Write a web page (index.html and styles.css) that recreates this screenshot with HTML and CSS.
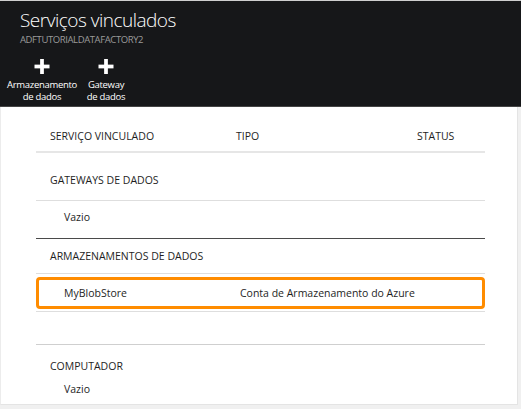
FILE: index.html
```html
<!DOCTYPE html>
<html lang="pt">
<head>
<meta charset="utf-8">
<title>Serviços vinculados</title>
<link rel="stylesheet" href="styles.css">
</head>
<body>
<header class="blade-head">
  <h1 class="title">Serviços vinculados</h1>
  <div class="subtitle">ADFTUTORIALDATAFACTORY2</div>
  <div class="toolbar">
    <button class="cmd cmd-store">
      <svg class="plus" viewBox="0 0 16 16" width="16" height="16"><rect x="6" y="0" width="4" height="16" fill="#fff"/><rect x="0" y="6" width="16" height="4" fill="#fff"/></svg>
      <span>Armazenamento<br>de dados</span>
    </button>
    <button class="cmd cmd-gw">
      <svg class="plus" viewBox="0 0 16 16" width="16" height="16"><rect x="6" y="0" width="4" height="16" fill="#fff"/><rect x="0" y="6" width="16" height="4" fill="#fff"/></svg>
      <span>Gateway<br>de dados</span>
    </button>
  </div>
</header>
<main class="panel">
  <div class="table">
    <div class="row head">
      <span>SERVIÇO VINCULADO</span><span>TIPO</span><span>STATUS</span>
    </div>
    <div class="group g-gw">GATEWAYS DE DADOS</div>
    <div class="empty e-gw">Vazio</div>
    <div class="group g-store">ARMAZENAMENTOS DE DADOS</div>
    <div class="row item selected">
      <span>MyBlobStore</span><span>Conta de Armazenamento do Azure</span><span></span>
    </div>
    <div class="sep"></div>
    <div class="spacer"></div>
    <div class="group g-comp">COMPUTADOR</div>
    <div class="empty e-comp">Vazio</div>
  </div>
</main>
</body>
</html>
```
FILE: styles.css
```css
* { box-sizing: border-box; }
html, body { margin: 0; padding: 0; }
body {
  background: #f0f0f0;
  font-family: "Open Sans", "Noto Sans", sans-serif;
  width: 521px;
  height: 409px;
  overflow: hidden;
}
.blade-head {
  background: #161719;
  border-top: 1px solid #cfcfcf;
  border-bottom: 1px solid #444;
  height: 107px;
  padding: 0 0 0 20px;
  color: #fff;
}
.title {
  margin: 0;
  padding-top: 6px;
  font-weight: 300;
  font-size: 19px;
  line-height: 26px;
  letter-spacing: -0.5px;
}
.subtitle {
  font-size: 9.5px;
  color: #9b9b9b;
  line-height: 12px;
  letter-spacing: -0.4px;
  margin-top: 1px;
}
.toolbar {
  display: flex;
  margin-left: -13px;
  margin-top: 13px;
}
.cmd {
  background: none;
  border: 0;
  padding: 0;
  color: #fff;
  font-family: inherit;
  font-size: 9.5px;
  line-height: 12px;
  letter-spacing: -0.3px;
  display: flex;
  flex-direction: column;
  align-items: center;
}
.cmd-store { width: 70px; }
.cmd-gw { width: 44px; margin-left: 7px; }
.plus { display: block; margin-bottom: 5px; width: 16px; height: 15px; }
.panel {
  background: #fff;
  width: 518px;
  height: 298px;
  border-left: 1px solid #ececec;
  border-right: 1px solid #e4e4e4;
  border-bottom: 1px solid #e4e4e4;
  padding: 14px 0 0 35px;
}
.table {
  width: 449px;
  color: #1e1e1e;
  font-size: 10.5px;
}
.row {
  display: grid;
  grid-template-columns: 186px 181px 1fr;
  padding-left: 14px;
}
.head {
  height: 32px;
  line-height: 30px;
  border-bottom: 2px solid #e6e6e6;
}
.group {
  padding-left: 14px;
  line-height: 20px;
}
.g-gw { padding-top: 17px; padding-bottom: 10px; border-bottom: 1px solid #dedede; }
.empty { padding-left: 28px; line-height: 20px; }
.e-gw { padding-top: 6px; padding-bottom: 11px; border-bottom: 1px solid #4a4a4a; }
.g-store { padding-top: 7px; padding-bottom: 7px; border-bottom: 1px solid #dedede; }
.item.selected {
  margin-top: 3px;
  height: 32px;
  line-height: 26px;
  border: 3px solid #ff8c00;
  border-radius: 4px;
  padding-left: 25px;
  grid-template-columns: 176px 1fr 0;
}
.sep { margin-top: 2px; border-bottom: 1px solid #dedede; }
.spacer { height: 33px; border-bottom: 1px solid #cfcfcf; }
.g-comp { padding-top: 11px; }
.e-comp { padding-top: 3px; }
```
